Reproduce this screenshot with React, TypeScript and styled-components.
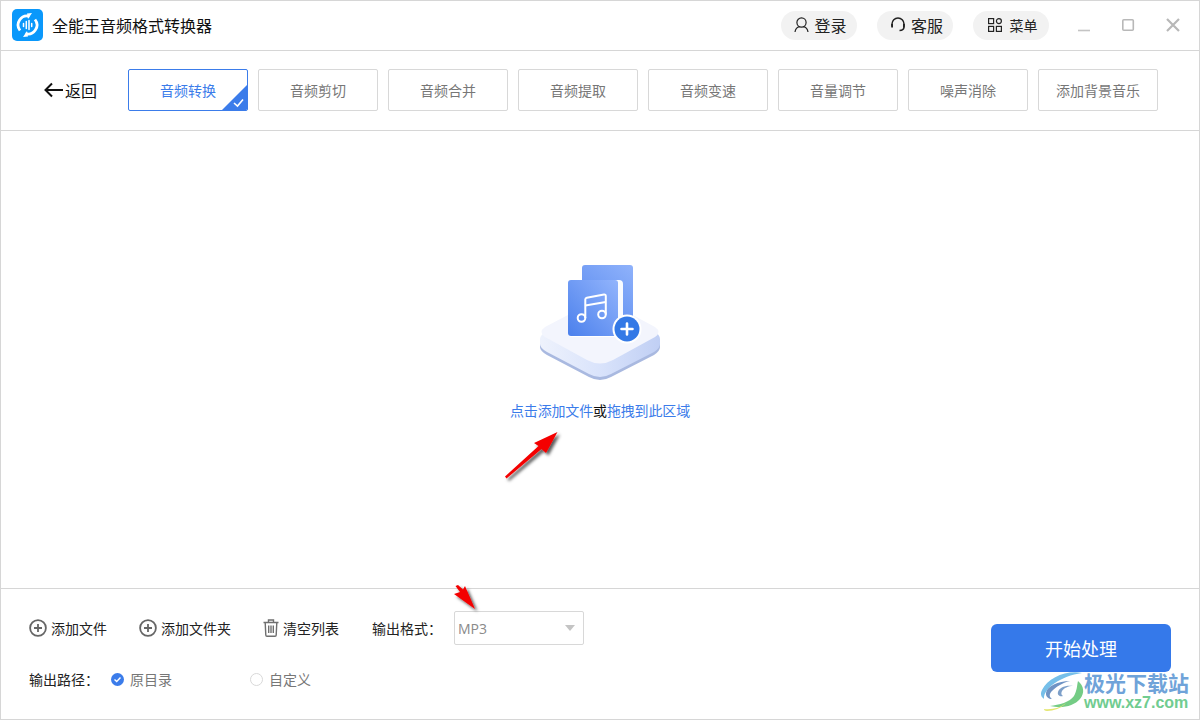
import React from "react";
import styled, { createGlobalStyle } from "styled-components";

const Global = createGlobalStyle`
  html, body { margin: 0; padding: 0; background: #fff; }
  * { box-sizing: border-box; }
  body { font-family: "Noto Sans CJK SC", "Noto Sans", sans-serif; }
`;

const Window = styled.div`
  position: relative;
  width: 1200px;
  height: 720px;
  display: flex;
  flex-direction: column;
  border: 1px solid #d6d6d6;
  overflow: hidden;
  background: #fff;
`;

const TitleBar = styled.header`
  height: 50px;
  flex: none;
  display: flex;
  align-items: center;
  padding: 0 18px 1px 11px;
  border-bottom: 1px solid #d6d6d6;
`;

const AppTitle = styled.h1`
  margin: 0 0 0 9px;
  flex: 1;
  font-size: 16px;
  font-weight: 400;
  color: #111;
`;

const Pill = styled.button<{ $gap: number }>`
  width: 76px;
  height: 29px;
  margin-right: 20px;
  display: flex;
  align-items: center;
  justify-content: center;
  gap: ${(p) => p.$gap}px;
  padding: 0 0 0 3px;
  border: none;
  border-radius: 15px;
  background: #f2f2f2;
  color: #222;
  font: 400 16px "Noto Sans CJK SC", sans-serif;
`;

const SmallLabel = styled.span`
  font-size: 14px;
`;

const WinControls = styled.div`
  display: flex;
  align-items: center;
  gap: 30px;
  margin-left: 8px;
`;

const Toolbar = styled.nav`
  height: 80px;
  flex: none;
  display: flex;
  align-items: center;
  padding: 0 0 2px 43px;
  border-bottom: 1px solid #d6d6d6;
`;

const BackLink = styled.a`
  width: 84px;
  display: flex;
  align-items: center;
  font-size: 16px;
  color: #111;
`;

const Tabs = styled.div`
  display: flex;
  gap: 10px;
`;

const Tab = styled.div<{ $active?: boolean }>`
  position: relative;
  width: 120px;
  height: 42px;
  display: flex;
  align-items: center;
  justify-content: center;
  overflow: hidden;
  border: 1px solid ${(p) => (p.$active ? "#3b7cea" : "#d8d8d8")};
  border-radius: 2px;
  font-size: 14px;
  color: ${(p) => (p.$active ? "#3b7cea" : "#777")};
`;

const Corner = styled.svg`
  position: absolute;
  right: 0;
  bottom: 0;
`;

const Main = styled.main`
  flex: 1;
  display: flex;
  flex-direction: column;
  align-items: center;
  padding-top: 134px;
`;

const DropHint = styled.p`
  margin: 18px 0 0;
  font-size: 14px;
  line-height: 22px;
  letter-spacing: -0.15px;
  color: #3b7cea;
`;

const Or = styled.span`
  color: #111;
`;

const Footer = styled.footer`
  height: 131px;
  flex: none;
  display: flex;
  justify-content: space-between;
  padding: 22px 28px 0 28px;
  border-top: 1px solid #d6d6d6;
`;

const Options = styled.div`
  display: flex;
  flex-direction: column;
  gap: 17px;
`;

const OptionRow = styled.div`
  display: flex;
  align-items: center;
  height: 34px;
`;

const ActionLink = styled.a<{ $width: number }>`
  width: ${(p) => p.$width}px;
  display: flex;
  align-items: center;
  gap: 4px;
  font-size: 14px;
  color: #222;
`;

const FieldLabel = styled.span<{ $width: number }>`
  width: ${(p) => p.$width}px;
  font-size: 14px;
  color: #222;
`;

const Select = styled.div`
  width: 130px;
  height: 34px;
  display: flex;
  align-items: center;
  justify-content: space-between;
  padding: 0 4px 0 3px;
  border: 1px solid #d8d8d8;
  border-radius: 2px;
  font: 400 14px "Open Sans", sans-serif;
  color: #8a8a8a;
`;

const Caret = styled.i`
  width: 0;
  height: 0;
  margin-right: 4px;
  border-left: 5px solid transparent;
  border-right: 5px solid transparent;
  border-top: 6px solid #c4c4c4;
`;

const Radio = styled.label<{ $width: number }>`
  width: ${(p) => p.$width}px;
  display: flex;
  align-items: center;
  gap: 6px;
  font-size: 14px;
  color: #777;
`;

const StartButton = styled.button`
  width: 180px;
  height: 48px;
  margin-top: 13px;
  border: none;
  border-radius: 6px;
  background: #3579ea;
  color: #fff;
  font: 400 18px "Noto Sans CJK SC", sans-serif;
`;

const Overlay = styled.svg`
  position: absolute;
  left: -1px;
  top: -1px;
  pointer-events: none;
`;

const Watermark = styled.div`
  position: absolute;
  left: 1039px;
  top: 670px;
  display: flex;
  align-items: center;
  gap: 0;
`;

const WatermarkText = styled.div`
  display: flex;
  flex-direction: column;
  align-items: flex-start;
  margin-left: -4px;
`;

const WatermarkCn = styled.span`
  font-size: 21px;
  line-height: 23px;
  font-weight: 700;
  color: #6fa3d9;
`;

const WatermarkEn = styled.span`
  font: 700 16px/17px "Liberation Sans", sans-serif;
  color: #70cc90;
`;

const tabs = ["音频转换", "音频剪切", "音频合并", "音频提取", "音频变速", "音量调节", "噪声消除", "添加背景音乐"];

const PlusCircle = () => (
  <svg width="18" height="18" viewBox="0 0 18 18" fill="none" stroke="#666" strokeWidth="1.8">
    <circle cx="9" cy="9" r="7.9" />
    <path d="M9 5v8M5 9h8" />
  </svg>
);

const Trash = () => (
  <svg width="16" height="18" viewBox="0 0 16 18" fill="none" stroke="#6f6f6f" strokeWidth="1.4">
    <path d="M0.5 3.5h15M5.5 3.2V1h5v2.2M2.2 3.5l.6 12.6c0 .7.5 1.2 1.2 1.2h8c.7 0 1.2-.5 1.2-1.2l.6-12.6" />
    <path d="M5.7 6.5v7.5M8 6.5v7.5M10.3 6.5v7.5" />
  </svg>
);

const Illustration = () => (
  <svg width="121" height="116" viewBox="0 0 121 116">
    <defs>
      <linearGradient id="back" x1="1" y1="0" x2="0.3" y2="1">
        <stop offset="0" stopColor="#8fb2fb" />
        <stop offset="1" stopColor="#5d8df0" />
      </linearGradient>
      <linearGradient id="front" x1="1" y1="0" x2="0" y2="1">
        <stop offset="0" stopColor="#92b4fc" />
        <stop offset="1" stopColor="#4b80ec" />
      </linearGradient>
      <linearGradient id="side" x1="0" y1="0" x2="1" y2="0">
        <stop offset="0" stopColor="#eef2fc" />
        <stop offset="0.5" stopColor="#d9e3fb" />
        <stop offset="1" stopColor="#c0cff4" />
      </linearGradient>
    </defs>
    <path d="M47 50 Q60 43 74 50 L114 71 Q120 75 120 79 L120 82 Q120 86 114 90 L71 112 Q60 118 49 112 L7 90 Q0 86 0 82 L0 78 Q0 75 7 71Z" fill="#a9b9e0" />
    <path d="M47 45 Q60 38 74 45 L114 66 Q120 70 120 74 L120 79 Q120 83 114 87 L71 109 Q60 115 49 109 L7 87 Q0 83 0 79 L0 74 Q0 70 7 66Z" fill="url(#side)" />
    <path d="M47 40 Q60 33 74 40 L115 62 Q122 67 115 72 L73 95 Q60 102 47 95 L5 72 Q-2 67 5 62Z" fill="#f3f5fd" />
    <path d="M45 0h45a3 3 0 0 1 3 3v56H42V3a3 3 0 0 1 3-3Z" fill="url(#back)" />
    <path d="M31 15h48a4 4 0 0 1 4 4v50a3 3 0 0 1-3 3H32a4 4 0 0 1-4-4V18a3 3 0 0 1 3-3Z" fill="#fff" opacity="0.95" />
    <rect x="28" y="15" width="50" height="56" rx="3" fill="url(#front)" />
    <g fill="none" stroke="#fff" strokeWidth="2">
      <circle cx="41.5" cy="53" r="3.8" />
      <circle cx="62" cy="49.500" r="3.800" />
      <path d="M45.300 53V34.500c0-1 .5-1.600 1.500-1.800L64 29.500c1-.2 1.800.4 1.800 1.400V49.500" />
      <path d="M45.300 40.500l20.500-3.600" />
    </g>
    <circle cx="87" cy="64" r="14.500" fill="#fff" />
    <circle cx="87" cy="64" r="12.500" fill="#3479e6" />
    <path d="M87 58.500v11M81.500 64h11" stroke="#fff" strokeWidth="2.600" strokeLinecap="round" />
  </svg>
);

const Logo = () => (
  <svg width="31" height="32" viewBox="0 0 31 32">
    <rect width="31" height="32" rx="5" fill="#0a98fb" />
    <g fill="none" stroke="#fff" strokeWidth="2.800">
      <path d="M8 21.500A9 9 0 0 1 17.500 7.300" />
      <path d="M23 10.500A9 9 0 0 1 13.500 24.700" />
    </g>
    <path d="M20 4l-4 6-1-5.500ZM11 28l4-6 1 5.500Z" fill="#fff" />
    <path d="M11.500 14.500v3M14.300 12.500v7M17 11.500v9M19.700 14.500v3" stroke="#fff" strokeWidth="1.500" strokeLinecap="round" />
  </svg>
);

const Swirl = () => (
  <svg width="48" height="40" viewBox="0 0 48 40" fill="none">
    <path d="M42 2C26-1 8 7 2 19c-2 4-1 7 2 9C3 18 20 5 42 2Z" fill="#76bfe9" />
    <path d="M30 10C18 10 7 15 6 22c-.4 4 3 6 6 6-3-2-3-5 0-8 4-4 10-8 18-10Z" fill="#6f93c4" />
    <path d="M33 15c-8-1-14 2-15 6-1 3 2 5 5 4-2-1-2-3-1-5 2-3 6-5 11-5Z" fill="#7d9fc9" />
    <path d="M38 10c6 5 7 12 2 18-6 7-18 10-30 7 9-1 20-4 24-10 3-5 3-11 4-15Z" fill="#74cc85" />
    <path d="M4 38c8 1 16-1 22-6-4 5-13 8-19 8-2 0-3-1-3-2Z" fill="#e4e66f" />
  </svg>
);

export default function App() {
  return (
    <>
      <Global />
      <Window>
        <TitleBar>
          <Logo />
          <AppTitle>全能王音频格式转换器</AppTitle>
          <Pill $gap={5}>
            <svg width="15" height="16" viewBox="0 0 15 16" fill="none" stroke="#222" strokeWidth="1.200">
              <circle cx="7.500" cy="5.500" r="4.600" />
              <path d="M1 15c.4-3 2.600-5 4.600-5.400M14 15c-.4-3-2.600-5-4.600-5.400" />
            </svg>
            登录
          </Pill>
          <Pill $gap={5}>
            <svg width="16" height="16" viewBox="0 0 16 16" fill="none" stroke="#222" strokeWidth="1.500">
              <path d="M2 9.500V7a6 6 0 0 1 12 0v2.500" />
              <path d="M14 9.500c0 2.500-1.800 4-4.500 4" />
              <rect x="1.200" y="7" width="1.800" height="3.500" fill="#222" stroke="none" />
              <rect x="13" y="7" width="1.800" height="3.500" fill="#222" stroke="none" />
            </svg>
            客服
          </Pill>
          <Pill $gap={8}>
            <svg width="14" height="14" viewBox="0 0 14 14" fill="none" stroke="#222" strokeWidth="1.200">
              <rect x="0.600" y="0.600" width="5" height="5" />
              <rect x="0.600" y="8.400" width="5" height="5" />
              <rect x="8.400" y="8.400" width="5" height="5" />
              <circle cx="10.900" cy="3.100" r="2.500" />
            </svg>
            <SmallLabel>菜单</SmallLabel>
          </Pill>
          <WinControls>
            <svg width="14" height="14" viewBox="0 0 14 14"><path d="M1 12.500h12" stroke="#c4c4c4" strokeWidth="1.600" /></svg>
            <svg width="14" height="14" viewBox="0 0 14 14" fill="none"><rect x="1.800" y="1.800" width="10.500" height="10.500" rx="1" stroke="#b8b8b8" strokeWidth="1.600" /></svg>
            <svg width="16" height="16" viewBox="0 0 16 16"><path d="M2 2l12 12M14 2L2 14" stroke="#b8b8b8" strokeWidth="2.200" /></svg>
          </WinControls>
        </TitleBar>

        <Toolbar>
          <BackLink>
            <svg width="21" height="16" viewBox="0 0 21 16" fill="none" stroke="#111" strokeWidth="2"><path d="M1.500 8h17.500M8 1.500L1.500 8 8 14.500" /></svg>
            返回
          </BackLink>
          <Tabs>
            {tabs.map((label, i) => (
              <Tab key={label} $active={i === 0}>
                {label}
                {i === 0 && (
                  <Corner width="25" height="25" viewBox="0 0 25 25">
                    <path d="M25 0V25H0Z" fill="#3b7cea" />
                    <path d="M12 18l3.500 3L21 14.500" fill="none" stroke="#fff" strokeWidth="1.600" />
                  </Corner>
                )}
              </Tab>
            ))}
          </Tabs>
        </Toolbar>

        <Main>
          <Illustration />
          <DropHint>
            点击添加文件<Or>或</Or>拖拽到此区域
          </DropHint>
        </Main>

        <Footer>
          <Options>
            <OptionRow>
              <ActionLink $width={110}><PlusCircle />添加文件</ActionLink>
              <ActionLink $width={124}><PlusCircle />添加文件夹</ActionLink>
              <ActionLink $width={109}><Trash />清空列表</ActionLink>
              <FieldLabel $width={82}>输出格式：</FieldLabel>
              <Select>MP3<Caret /></Select>
            </OptionRow>
            <OptionRow>
              <FieldLabel $width={82}>输出路径：</FieldLabel>
              <Radio $width={139}>
                <svg width="13" height="13" viewBox="0 0 13 13">
                  <circle cx="6.500" cy="6.500" r="6.500" fill="#3b7cea" />
                  <path d="M3.500 6.500l2.200 2.100 3.800-4" fill="none" stroke="#fff" strokeWidth="1.400" />
                </svg>
                原目录
              </Radio>
              <Radio $width={80}>
                <svg width="13" height="13" viewBox="0 0 13 13">
                  <circle cx="6.500" cy="6.500" r="6" fill="#fff" stroke="#d8d8d8" />
                </svg>
                自定义
              </Radio>
            </OptionRow>
          </Options>
          <StartButton>开始处理</StartButton>
        </Footer>

        <Overlay width="1200" height="720" viewBox="0 0 1200 720">
          <defs>
            <filter id="arrowShadow" x="-30%" y="-30%" width="170%" height="170%">
              <feDropShadow dx="2.500" dy="2.500" stdDeviation="1.800" floodColor="#000" floodOpacity="0.65" />
            </filter>
          </defs>
          <path d="M505 476.500L538.500 446 534 443 557.500 432 546 453 541.500 449 506.500 478.500Z" fill="#f40000" filter="url(#arrowShadow)" />
          <path d="M475 609L454 594 460 592 455.500 586 458 585 463 589.500 465 586Z" fill="#f40000" filter="url(#arrowShadow)" />
        </Overlay>

        <Watermark>
          <Swirl />
          <WatermarkText>
            <WatermarkCn>极光下载站</WatermarkCn>
            <WatermarkEn>www.xz7.com</WatermarkEn>
          </WatermarkText>
        </Watermark>
      </Window>
    </>
  );
}
